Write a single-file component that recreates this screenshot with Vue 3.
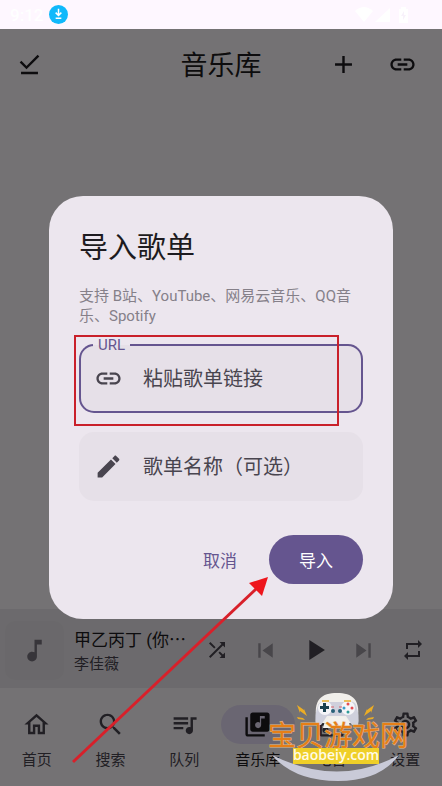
<script setup>
import { ref } from 'vue'

const url = ref('')
const listName = ref('')

const icons = {
  done: 'M20.13 5.41 18.72 4l-9.19 9.19-4.25-4.24-1.41 1.41 5.66 5.66zM5 18h14v2H5z',
  add: 'M19 13h-6v6h-2v-6H5v-2h6V5h2v6h6v2z',
  link: 'M3.9 12c0-1.71 1.39-3.1 3.1-3.1h4V7H7c-2.76 0-5 2.24-5 5s2.24 5 5 5h4v-1.9H7c-1.71 0-3.1-1.39-3.1-3.1zM8 13h8v-2H8v2zm9-6h-4v1.9h4c1.71 0 3.1 1.39 3.1 3.1s-1.39 3.1-3.1 3.1h-4V17h4c2.76 0 5-2.24 5-5s-2.24-5-5-5z',
  edit: 'M3 17.25V21h3.75L17.81 9.94l-3.75-3.75L3 17.25zM20.71 7.04c.39-.39.39-1.02 0-1.41l-2.34-2.34c-.39-.39-1.02-.39-1.41 0l-1.83 1.83 3.75 3.75 1.83-1.83z',
  note: 'M12 3v10.55c-.59-.34-1.27-.55-2-.55-2.21 0-4 1.79-4 4s1.79 4 4 4 4-1.79 4-4V7h4V3h-6z'
}

const controls = [
  { label: '随机播放', size: 'small', d: 'M10.59 9.17 5.41 4 4 5.41l5.17 5.17 1.42-1.41zM14.5 4l2.04 2.04L4 18.59 5.41 20 17.96 7.46 20 9.5V4h-5.5zm.33 9.41-1.41 1.41 3.13 3.13L14.5 20H20v-5.5l-2.04 2.04-3.13-3.13z' },
  { label: '上一首', size: 'medium', faded: true, d: 'M6 6h2v12H6zm3.5 6 8.5 6V6z' },
  { label: '播放', size: 'large', d: 'M8 5v14l11-7z' },
  { label: '下一首', size: 'medium', faded: true, d: 'M6 18l8.5-6L6 6v12zM16 6v12h2V6h-2z' },
  { label: '循环', size: 'small', d: 'M7 7h10v3l4-4-4-4v3H5v6h2V7zm10 10H7v-3l-4 4 4 4v-3h12v-6h-2v4z' }
]

const tabs = [
  { label: '首页', d: 'M12 5.69l5 4.5V18h-2v-6H9v6H7v-7.81l5-4.5M12 3L2 12h3v8h6v-6h2v6h6v-8h3L12 3z' },
  { label: '搜索', d: 'M15.5 14h-.79l-.28-.27C15.41 12.59 16 11.11 16 9.5 16 5.91 13.09 3 9.5 3S3 5.91 3 9.5 5.91 16 9.5 16c1.61 0 3.09-.59 4.23-1.57l.27.28v.79l5 4.99L20.49 19l-4.99-5zm-6 0C7.01 14 5 11.99 5 9.5S7.01 5 9.5 5 14 7.01 14 9.5 11.99 14 9.5 14z' },
  { label: '队列', d: 'M15 6H3v2h12V6zm0 4H3v2h12v-2zM3 16h8v-2H3v2zM17 6v8.18c-.31-.11-.65-.18-1-.18-1.66 0-3 1.34-3 3s1.34 3 3 3 3-1.34 3-3V8h3V6h-5z' },
  { label: '音乐库', active: true, d: 'M20 2H8c-1.1 0-2 .9-2 2v12c0 1.1.9 2 2 2h12c1.1 0 2-.9 2-2V4c0-1.1-.9-2-2-2zm-2 5h-3v5.5c0 1.38-1.12 2.5-2.5 2.5S10 13.88 10 12.5s1.12-2.5 2.5-2.5c.57 0 1.08.19 1.5.51V5h4v2zM4 6H2v14c0 1.1.9 2 2 2h14v-2H4V6z' },
  { label: '电台', d: 'M3.24 6.15C2.51 6.43 2 7.17 2 8v12c0 1.1.89 2 2 2h16c1.11 0 2-.9 2-2V8c0-1.11-.89-2-2-2H8.3l8.26-3.34L15.88 1 3.24 6.15zM20 20H4v-7h16v7zm0-9h-2V9h-2v2H4V8h16v3zM7 14a2.5 2.5 0 1 0 0 5 2.5 2.5 0 0 0 0-5z' },
  { label: '设置', d: 'M19.43 12.98c.04-.32.07-.64.07-.98 0-.34-.03-.66-.07-.98l2.11-1.65c.19-.15.24-.42.12-.64l-2-3.46c-.09-.16-.26-.25-.44-.25-.06 0-.12.01-.17.03l-2.49 1c-.52-.4-1.08-.73-1.69-.98l-.38-2.65C14.46 2.18 14.25 2 14 2h-4c-.25 0-.46.18-.49.42l-.38 2.65c-.61.25-1.17.59-1.69.98l-2.49-1c-.06-.02-.12-.03-.18-.03-.17 0-.34.09-.43.25l-2 3.46c-.13.22-.07.49.12.64l2.11 1.65c-.04.32-.07.65-.07.98 0 .33.03.66.07.98l-2.11 1.65c-.19.15-.24.42-.12.64l2 3.46c.09.16.26.25.44.25.06 0 .12-.01.17-.03l2.49-1c.52.4 1.08.73 1.69.98l.38 2.65c.03.24.24.42.49.42h4c.25 0 .46-.18.49-.42l.38-2.65c.61-.25 1.17-.59 1.69-.98l2.49 1c.06.02.12.03.18.03.17 0 .34-.09.43-.25l2-3.46c.12-.22.07-.49-.12-.64l-2.11-1.65zm-1.98-1.71c.04.31.05.52.05.73 0 .21-.02.43-.05.73l-.14 1.13.89.7 1.08.84-.7 1.21-1.27-.51-1.04-.42-.9.68c-.43.32-.84.56-1.25.73l-1.06.43-.16 1.13-.2 1.35h-1.4l-.19-1.35-.16-1.13-1.06-.43c-.43-.18-.83-.41-1.23-.71l-.91-.7-1.06.43-1.27.51-.7-1.21 1.08-.84.89-.7-.14-1.13c-.03-.31-.05-.54-.05-.74s.02-.43.05-.73l.14-1.13-.89-.7-1.08-.84.7-1.21 1.27.51 1.04.42.9-.68c.43-.32.84-.56 1.25-.73l1.06-.43.16-1.13.2-1.35h1.39l.19 1.35.16 1.13 1.06.43c.43.18.83.41 1.23.71l.91.7 1.06-.43 1.27-.51.7 1.21-1.07.85-.89.7.14 1.13zM12 8c-2.21 0-4 1.79-4 4s1.79 4 4 4 4-1.79 4-4-1.79-4-4-4zm0 6c-1.1 0-2-.9-2-2s.9-2 2-2 2 .9 2 2-.9 2-2 2z' }
]
</script>

<template>
  <div class="page" lang="zh-CN">
    <div class="status">
      <span>9:12</span>
      <svg class="download" viewBox="0 0 20 20">
        <circle cx="10" cy="10" r="10" fill="#10b9fb" />
        <path d="M10 4v7M7 8l3 3 3-3M7 14h6" fill="none" stroke="#fff" stroke-width="1.600" />
      </svg>
      <svg class="signals" viewBox="0 0 54 18" fill="#fff">
        <path d="M0 5Q9-3 18 5L9 16z" />
        <path d="M20 16 35 2v14z" />
        <path d="M44 3h2V1h5v2h2v14h-9z" />
        <path d="M49 5l-3 5h2v4l3-5h-2z" fill="#f8f2fb" />
      </svg>
    </div>

    <div class="app">
      <header class="bar">
        <button class="icon-button" aria-label="完成">
          <svg class="icon" viewBox="0 0 24 24"><path :d="icons.done" /></svg>
        </button>
        <h1>音乐库</h1>
        <div class="actions">
          <button class="icon-button" aria-label="新建歌单">
            <svg class="icon" viewBox="0 0 24 24"><path :d="icons.add" /></svg>
          </button>
          <button class="icon-button" aria-label="导入链接">
            <svg class="icon" viewBox="0 0 24 24"><path :d="icons.link" /></svg>
          </button>
        </div>
      </header>

      <main class="library"></main>

      <section class="player">
        <div class="cover">
          <svg class="icon" viewBox="0 0 24 24"><path :d="icons.note" /></svg>
        </div>
        <div class="track">
          <div class="track-title">甲乙丙丁 (你<span class="dots">…</span></div>
          <div class="artist">李佳薇</div>
        </div>
        <div class="controls">
          <button v-for="c in controls" :key="c.label" :aria-label="c.label" :class="{ faded: c.faded }">
            <svg :class="['icon', c.size]" viewBox="0 0 24 24"><path :d="c.d" /></svg>
          </button>
        </div>
      </section>

      <nav class="tabs">
        <a v-for="t in tabs" :key="t.label" href="#" :class="{ active: t.active }">
          <span class="pill"><svg class="icon" viewBox="0 0 24 24"><path :d="t.d" /></svg></span>
          <span>{{ t.label }}</span>
        </a>
      </nav>

      <div class="scrim">
        <form class="dialog" role="dialog" aria-labelledby="dialog-title" @submit.prevent>
          <h2 id="dialog-title">导入歌单</h2>
          <p>支持 B站、YouTube、网易云音乐、QQ音乐、Spotify</p>
          <div class="field focused">
            <label for="url">URL</label>
            <svg class="icon" viewBox="0 0 24 24"><path :d="icons.link" /></svg>
            <input id="url" v-model="url" type="text" placeholder="粘贴歌单链接">
          </div>
          <div class="field">
            <svg class="icon" viewBox="0 0 24 24"><path :d="icons.edit" /></svg>
            <input v-model="listName" type="text" aria-label="歌单名称（可选）" placeholder="歌单名称（可选）">
          </div>
          <div class="buttons">
            <button type="button" class="cancel">取消</button>
            <button type="submit" class="confirm">导入</button>
          </div>
        </form>
      </div>
    </div>

    <svg class="notes" viewBox="0 0 442 786">
      <rect x="75" y="336" width="263" height="89" fill="none" stroke="#c9202a" stroke-width="2" />
      <path d="M73 762 256 589" stroke="#d8202a" stroke-width="3" />
      <path d="M268 577 249 583 262 596z" fill="#ee151c" />
    </svg>

    <svg class="watermark" viewBox="0 0 160 100">
      <path d="M12 70Q78 103 139 70Q120 96 78 96Q34 96 12 70z" fill="#c9cad8" />
      <path d="M57 38C52 14 62 8 77 8s25 6 20 30z" fill="#f1efeb" />
      <path d="M58 20Q60 15 69 17L85 17Q95 15 96 20Q100 32 98 40L92 40L86 31H67L61 40L56 40Q54 32 58 20z" fill="#cfd0dc" />
      <circle cx="65" cy="23" r="7" fill="#f5f5f8" />
      <circle cx="88" cy="23" r="7" fill="#f5f5f8" />
      <path d="M63 18h3v3h3v3h-3v3h-3v-3h-3v-3h3z" fill="#1c4250" />
      <circle cx="88" cy="19" r="1.500" fill="#e64e52" />
      <circle cx="88" cy="27" r="1.500" fill="#309b99" />
      <circle cx="84" cy="23" r="1.500" fill="#3b9bc9" />
      <circle cx="92" cy="23" r="1.500" fill="#e64e52" />
      <circle cx="73" cy="26" r="2" fill="#286078" />
      <circle cx="80" cy="26" r="2" fill="#286078" />
      <path d="M71 22h3M79 22h3" stroke="#d7646c" />
      <path d="M62 16h7M84 16h7" stroke="#e9af2c" stroke-width="1.500" />
      <path d="M63 43Q65 31 77 31t13 12z" fill="#f3f1ed" />
      <path d="M37 20l7 5v-1l3 7-7-5v2zM37 32l6 1 2 2-7-1zM114 20l-7 5v-1l-3 7 7-5v2zM114 32l-6 1-2 2 7-1z" fill="#ecad24" />
      <text class="mark-name" x="8" y="61">宝贝游戏网</text>
      <rect x="33" y="63" width="86" height="16" fill="#efcf28" />
      <text class="mark-site" x="76" y="75" text-anchor="middle">baobeiy.com</text>
    </svg>
  </div>
</template>

<style>
body {
  margin: 0;
}
</style>

<style scoped>
.page {
  position: relative;
  display: flex;
  flex-direction: column;
  min-height: 100vh;
  overflow: hidden;
  background: #fef7ff;
  color: #1d1b20;
  font-family: Roboto, "Noto Sans CJK SC", sans-serif;
}

.page * {
  box-sizing: border-box;
}

button,
input {
  margin: 0;
  padding: 0;
  border: 0;
  background: none;
  color: inherit;
  font: inherit;
}

.icon {
  display: block;
  flex: none;
  width: 29px;
  height: 29px;
  fill: currentColor;
}

.icon.small {
  width: 24px;
  height: 24px;
}

.icon.large {
  width: 34px;
  height: 34px;
}

.status {
  display: flex;
  align-items: center;
  gap: 6px;
  height: 29px;
  padding: 0 33px 0 10px;
  color: #fff;
  font-size: 17px;
  font-weight: 500;
}

.download {
  width: 19px;
  height: 19px;
}

.signals {
  width: 54px;
  height: 18px;
  margin-left: auto;
}

.app {
  position: relative;
  display: flex;
  flex: 1;
  flex-direction: column;
  background: #fdf9fd;
}

.bar {
  display: grid;
  grid-template-columns: 1fr auto 1fr;
  align-items: center;
  height: 70px;
}

.bar h1 {
  margin: 0;
  padding-bottom: 2px;
  font-size: 27px;
  font-weight: 400;
}

.icon-button {
  display: grid;
  place-items: center;
  width: 59px;
  height: 59px;
}

.actions {
  display: flex;
  justify-content: flex-end;
  padding-right: 10px;
}

.library {
  flex: 1;
}

.player {
  display: flex;
  align-items: center;
  height: 79px;
  padding: 3px 5px 0;
  background: #ece8ed;
}

.cover {
  display: grid;
  place-items: center;
  width: 59px;
  height: 59px;
  border-radius: 10px;
  background: #e7e3e9;
  color: #79747e;
}

.track {
  flex: 1;
  min-width: 0;
  padding-left: 10px;
  white-space: nowrap;
}

.track-title {
  font-size: 17px;
  line-height: 25px;
}

.dots {
  font-family: "Noto Sans CJK SC", sans-serif;
}

.artist {
  color: #49454f;
  font-size: 15px;
  line-height: 22px;
}

.controls {
  display: flex;
  color: #49454f;
}

.controls button {
  display: grid;
  place-items: center;
  width: 49px;
  height: 49px;
}

.controls .faded {
  color: #9d98a2;
}

.tabs {
  display: grid;
  grid-template-columns: repeat(6, 1fr);
  height: 98px;
  padding-top: 17px;
}

.tabs a {
  display: flex;
  flex-direction: column;
  align-items: center;
  gap: 5px;
  color: #49454f;
  font-size: 15px;
  line-height: 22px;
  text-decoration: none;
}

.tabs .active {
  color: #1d1b20;
}

.pill {
  display: grid;
  place-items: center;
  width: 100%;
  height: 39px;
  border-radius: 20px;
}

.active .pill {
  background: #e8def8;
}

.scrim {
  position: absolute;
  inset: 0;
  display: grid;
  grid-template-columns: minmax(0, 1fr);
  align-items: center;
  padding: 0 49px;
  background: rgba(0, 0, 0, 0.54);
}

.dialog {
  display: flex;
  flex-direction: column;
  padding: 30px 30px 35px;
  border-radius: 34px;
  background: #ece6ee;
}

.dialog h2 {
  margin: 0 0 16px;
  font-size: 29px;
  font-weight: 400;
  line-height: 44px;
}

.dialog p {
  margin: 0 0 18px;
  color: #858089;
  font-size: 15px;
  line-height: 20px;
}

.field {
  position: relative;
  display: flex;
  align-items: center;
  gap: 20px;
  height: 69px;
  margin-bottom: 19px;
  padding: 0 15px;
  border-radius: 15px;
  background: #e6e0e8;
  color: #49454f;
}

.focused {
  box-shadow: inset 0 0 0 2px #65558f;
}

.field label {
  position: absolute;
  top: -8px;
  left: 14px;
  padding: 0 5px;
  background: linear-gradient(#ece6ee 50%, #e6e0e8 50%);
  color: #65558f;
  font-size: 15px;
  line-height: 18px;
}

.field input {
  flex: 1;
  min-width: 0;
  height: 49px;
  outline: 0;
  font-size: 20px;
}

.field input::placeholder {
  color: #49454f;
  opacity: 1;
}

.buttons {
  display: flex;
  justify-content: flex-end;
  gap: 2px;
  padding-top: 15px;
}

.buttons button {
  height: 49px;
  border-radius: 25px;
  font-size: 17px;
}

.buttons .cancel {
  padding: 0 30px;
  color: #65558f;
}

.buttons .confirm {
  padding: 0 30px;
  background: #65558f;
  color: #fff;
}

.notes {
  position: absolute;
  inset: 0;
  width: 100%;
  height: 100%;
  pointer-events: none;
}

.watermark {
  position: absolute;
  right: 22px;
  bottom: 1px;
  width: 160px;
  height: 100px;
  pointer-events: none;
}

.mark-name {
  fill: #e67f16;
  stroke: #e3b98a;
  stroke-width: 1px;
  paint-order: stroke;
  font-family: "Noto Sans CJK SC", sans-serif;
  font-size: 28px;
  font-weight: 400;
}

.mark-site {
  fill: #fffbe6;
  font-family: "Open Sans", sans-serif;
  font-size: 14px;
  font-weight: 600;
}
</style>
